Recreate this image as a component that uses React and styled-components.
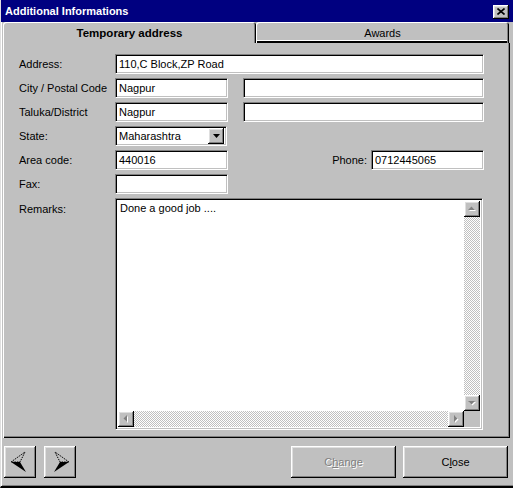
import React from 'react';
import styled, { createGlobalStyle } from 'styled-components';

const GlobalStyle = createGlobalStyle`
  html, body {
    margin: 0;
    padding: 0;
    background: #c0c0c0;
  }
  * {
    box-sizing: border-box;
  }
`;

const raised = `
  background: #c0c0c0;
  box-shadow: inset -1px -1px #000, inset 1px 1px #fff, inset -2px -2px #808080, inset 2px 2px #dfdfdf;
`;

const sunken = `
  background: #fff;
  border: 1px solid;
  border-color: #808080 #fff #fff #808080;
  box-shadow: inset 1px 1px #000, inset -1px -1px #c0c0c0;
`;

const Window = styled.div`
  width: 513px;
  height: 488px;
  display: flex;
  flex-direction: column;
  background: #c0c0c0;
  font-family: "Liberation Sans", Arial, sans-serif;
  font-size: 11px;
  color: #000;
  border-left: 1px solid #dfdfdf;
  border-bottom: 2px solid #000;
  box-shadow: inset 1px 0 #fff, inset 0 -1px #808080;
  overflow: hidden;
`;

const TitleBar = styled.div`
  height: 22px;
  flex: none;
  display: flex;
  align-items: center;
  justify-content: space-between;
  padding: 0 4px 0 4px;
  background: #000080;
  color: #fff;
  font-weight: bold;
  font-size: 11px;
`;

const CloseBox = styled.div`
  ${raised}
  width: 16px;
  height: 14px;
  display: flex;
  align-items: center;
  justify-content: center;
  margin-top: 1px;
`;

const Body = styled.div`
  flex: 1;
  display: flex;
  flex-direction: column;
  padding: 0 3px 0 2px;
`;

const Tabs = styled.div`
  display: flex;
  height: 21px;
  flex: none;
`;

const Tab = styled.div`
  width: 253px;
  display: flex;
  align-items: center;
  justify-content: center;
  background: #c0c0c0;
  border-radius: 3px 3px 0 0;
  font-weight: ${({ active }) => (active ? 'bold' : 'normal')};
  font-size: ${({ active }) => (active ? '11.5px' : '11px')};
  padding-top: 1px;
  box-shadow: ${({ active }) =>
    active
      ? 'inset 1px 1px #fff, inset -1px 0 #000, inset -2px 0 #808080'
      : 'inset 1px 1px #fff, inset -1px 0 #000, inset -2px 0 #808080, inset 0 -2px #000, inset 0 -3px #fff'};
`;

const Panel = styled.div`
  height: 395px;
  flex: none;
  display: flex;
  flex-direction: column;
  gap: 4px;
  padding: 11px 26px 6px 16px;
  box-shadow: inset 1px 0 #fff, inset -1px -1px #000, inset -2px -2px #808080;
`;

const Row = styled.div`
  display: flex;
  align-items: ${({ top }) => (top ? 'flex-start' : 'center')};
  gap: 15px;
`;

const Label = styled.div`
  width: 81px;
  flex: none;
  padding-top: ${({ top }) => (top ? '5px' : '0')};
  white-space: nowrap;
`;

const Field = styled.div`
  ${sunken}
  height: 20px;
  width: ${({ w }) => (w ? `${w}px` : 'auto')};
  flex: ${({ w }) => (w ? 'none' : '1')};
  display: flex;
  align-items: center;
  padding: 0 3px;
  white-space: nowrap;
`;

const Spacer = styled.div`
  flex: 1;
`;

const PhoneLabel = styled.div`
  margin-right: -11px;
`;

const Select = styled(Field)`
  padding: 2px 2px 2px 3px;
  justify-content: space-between;
`;

const DropBtn = styled.div`
  ${raised}
  width: 16px;
  height: 16px;
  display: flex;
  align-items: center;
  justify-content: center;
`;

const Memo = styled.div`
  ${sunken}
  width: 368px;
  height: 232px;
  padding: 2px;
  display: grid;
  grid-template-columns: 1fr 16px;
  grid-template-rows: 1fr 16px;
`;

const MemoText = styled.div`
  padding: 1px 0 0 2px;
  font-size: 11px;
`;

const Track = styled.div`
  display: flex;
  flex-direction: ${({ vertical }) => (vertical ? 'column' : 'row')};
  justify-content: space-between;
  background: repeating-conic-gradient(#c0c0c0 0 25%, #fff 0 50%) 0 0 / 2px 2px;
`;

const ScrollBtn = styled.div`
  ${raised}
  width: 16px;
  height: 16px;
  display: flex;
  align-items: center;
  justify-content: center;
`;

const Corner = styled.div`
  background: #c0c0c0;
`;

const Footer = styled.div`
  flex: 1;
  display: flex;
  align-items: flex-start;
  padding: 8px 2px 0 1px;
  gap: 8px;
`;

const Button = styled.div`
  ${raised}
  width: ${({ w }) => w}px;
  height: 32px;
  display: flex;
  align-items: center;
  justify-content: center;
  font-size: 11px;
  color: ${({ disabled }) => (disabled ? '#808080' : '#000')};
  text-shadow: ${({ disabled }) => (disabled ? '1px 1px #fff' : 'none')};
`;

const FooterGap = styled.div`
  flex: 1;
`;

const Arrow = ({ dir }) => {
  const paths = {
    up: 'M1 6 L4.5 2.5 L8 6 Z',
    down: 'M1 3 L4.5 6.5 L8 3 Z',
    left: 'M6 1 L2.5 4.5 L6 8 Z',
    right: 'M3 1 L6.5 4.5 L3 8 Z',
  };
  return (
    <svg width="10" height="10" viewBox="0 0 10 10">
      <path d={paths[dir]} fill="#fff" transform="translate(1 1)" />
      <path d={paths[dir]} fill="#808080" />
    </svg>
  );
};

const Dart = ({ flip }) => (
  <svg width="20" height="24" viewBox="0 0 20 24" style={flip ? { transform: 'scaleX(-1)' } : undefined}>
    <path d="M1 12 L15 2 L10 12 Z" fill="none" stroke="#000" strokeWidth="1" strokeDasharray="1.5 1" />
    <path d="M1 12 L10 12 L16 22 Z" fill="#000" />
  </svg>
);

export default function App() {
  return (
    <>
      <GlobalStyle />
      <Window>
        <TitleBar>
          <span>Additional Informations</span>
          <CloseBox>
            <svg width="8" height="7" viewBox="0 0 8 7">
              <path d="M0.5 0.5 L7.5 6.5 M7.5 0.5 L0.5 6.5" stroke="#000" strokeWidth="1.6" />
            </svg>
          </CloseBox>
        </TitleBar>
        <Body>
          <Tabs>
            <Tab active>Temporary address</Tab>
            <Tab>Awards</Tab>
          </Tabs>
          <Panel>
            <Row>
              <Label>Address:</Label>
              <Field>110,C Block,ZP Road</Field>
            </Row>
            <Row>
              <Label>City / Postal Code</Label>
              <Field w={113}>Nagpur</Field>
              <Field />
            </Row>
            <Row>
              <Label>Taluka/District</Label>
              <Field w={113}>Nagpur</Field>
              <Field />
            </Row>
            <Row>
              <Label>State:</Label>
              <Select w={112}>
                Maharashtra
                <DropBtn>
                  <svg width="7" height="4" viewBox="0 0 7 4">
                    <path d="M0 0 L7 0 L3.5 4 Z" fill="#000" />
                  </svg>
                </DropBtn>
              </Select>
            </Row>
            <Row>
              <Label>Area code:</Label>
              <Field w={113}>440016</Field>
              <Spacer />
              <PhoneLabel>Phone:</PhoneLabel>
              <Field w={113}>0712445065</Field>
            </Row>
            <Row>
              <Label>Fax:</Label>
              <Field w={113} />
            </Row>
            <Row top>
              <Label top>Remarks:</Label>
              <Memo>
                <MemoText>Done a good job ....</MemoText>
                <Track vertical>
                  <ScrollBtn><Arrow dir="up" /></ScrollBtn>
                  <ScrollBtn><Arrow dir="down" /></ScrollBtn>
                </Track>
                <Track>
                  <ScrollBtn><Arrow dir="left" /></ScrollBtn>
                  <ScrollBtn><Arrow dir="right" /></ScrollBtn>
                </Track>
                <Corner />
              </Memo>
            </Row>
          </Panel>
          <Footer>
            <Button w={32}><Dart /></Button>
            <Button w={32}><Dart flip /></Button>
            <FooterGap />
            <Button w={105} disabled>C<u>h</u>ange</Button>
            <Button w={105} style={{ marginLeft: -1 }}>C<u>l</u>ose</Button>
          </Footer>
        </Body>
      </Window>
    </>
  );
}
